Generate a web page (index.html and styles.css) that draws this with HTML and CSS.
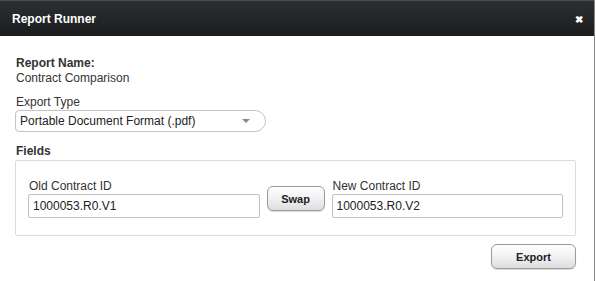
FILE: index.html
```html
<!DOCTYPE html>
<html lang="en">
  <head>
    <meta charset="UTF-8" />
    <title>Report Runner</title>
    <link rel="stylesheet" href="styles.css">
  </head>
  <body>
    <div class="dialog">
      <div class="dialog-header">
        <span class="dialog-title">Report Runner</span>
        <span class="dialog-close">&#x2716;</span>
      </div>

      <div class="dialog-body">
        <div class="field-title">Report Name:</div>
        <div class="report-name">Contract Comparison</div>

        <label class="label export-label">Export Type</label>
        <div class="select">
          <span>Portable Document Format (.pdf)</span>
          <span class="select-arrow"></span>
        </div>

        <div class="field-title fields-title">Fields</div>
        <div class="fields-box">
          <div class="field">
            <label class="label">Old Contract ID</label>
            <input class="text-input" type="text" value="1000053.R0.V1" />
          </div>
          <button class="btn swap-btn">Swap</button>
          <div class="field">
            <label class="label">New Contract ID</label>
            <input class="text-input" type="text" value="1000053.R0.V2" />
          </div>
        </div>

        <div class="actions">
          <button class="btn export-btn">Export</button>
        </div>
      </div>
    </div>
  </body>
</html>
```

FILE: styles.css
```css
body {
  margin: 0;
  font-family: "Liberation Sans", Arial, sans-serif;
  font-size: 12px;
  line-height: 15px;
  color: #333;
  background: #fff;
}

.dialog {
  width: 594px;
  height: 281px;
  border-right: 1px solid #8a8a8a;
  background: #fff;
}

.dialog-header {
  height: 35px;
  border-top: 1px solid #4a4d50;
  background: linear-gradient(#2c2f32, #1b1c1e);
  display: flex;
  align-items: center;
  justify-content: space-between;
  padding: 0 11px 0 12px;
  color: #fff;
}

.dialog-title {
  font-weight: bold;
  font-size: 12px;
  margin-top: 1px;
}

.dialog-close {
  font-size: 10px;
  font-weight: bold;
  margin-top: 2px;
}

.dialog-body {
  padding: 20px 18px 0 15px;
}

.field-title {
  font-weight: bold;
  padding-left: 1px;
}

.report-name {
  padding-left: 1px;
}

.label {
  display: block;
  padding-left: 1px;
}

.export-label {
  margin-top: 9px;
}

.select {
  height: 20px;
  width: 245px;
  border: 1px solid #c4c4c4;
  border-radius: 4px 11px 11px 4px;
  display: flex;
  align-items: center;
  justify-content: space-between;
  padding-left: 4px;
  color: #222;
}

.select-arrow {
  width: 0;
  height: 0;
  border-left: 4px solid transparent;
  border-right: 4px solid transparent;
  border-top: 4px solid #888;
  margin-right: 15px;
}

.fields-title {
  margin-top: 12px;
  margin-bottom: 1px;
}

.fields-box {
  border: 1px solid #dcdcdc;
  border-radius: 2px;
  padding: 18px 12px 17px 12px;
  display: flex;
  align-items: center;
  gap: 6px;
}

.field {
  flex: 1;
}

.text-input {
  display: block;
  width: 100%;
  box-sizing: border-box;
  height: 24px;
  border: 1px solid #c2c2c2;
  border-radius: 2px;
  padding: 0 4px;
  font-family: "Liberation Sans", Arial, sans-serif;
  font-size: 12px;
  color: #222;
  background: #fff;
}

.btn {
  font-family: "Liberation Sans", Arial, sans-serif;
  font-size: 11px;
  font-weight: bold;
  color: #222;
  border: 1px solid #9a9a9a;
  border-radius: 6px;
  background: linear-gradient(#ffffff, #f1f1f1 50%, #dedede);
  box-shadow: 0 1px 1px rgba(0, 0, 0, 0.15);
  height: 25px;
  padding: 0;
  cursor: pointer;
}

.swap-btn {
  width: 58px;
  margin: 0 1px;
}

.actions {
  display: flex;
  justify-content: flex-end;
  margin-top: 8px;
}

.export-btn {
  width: 85px;
}
```
